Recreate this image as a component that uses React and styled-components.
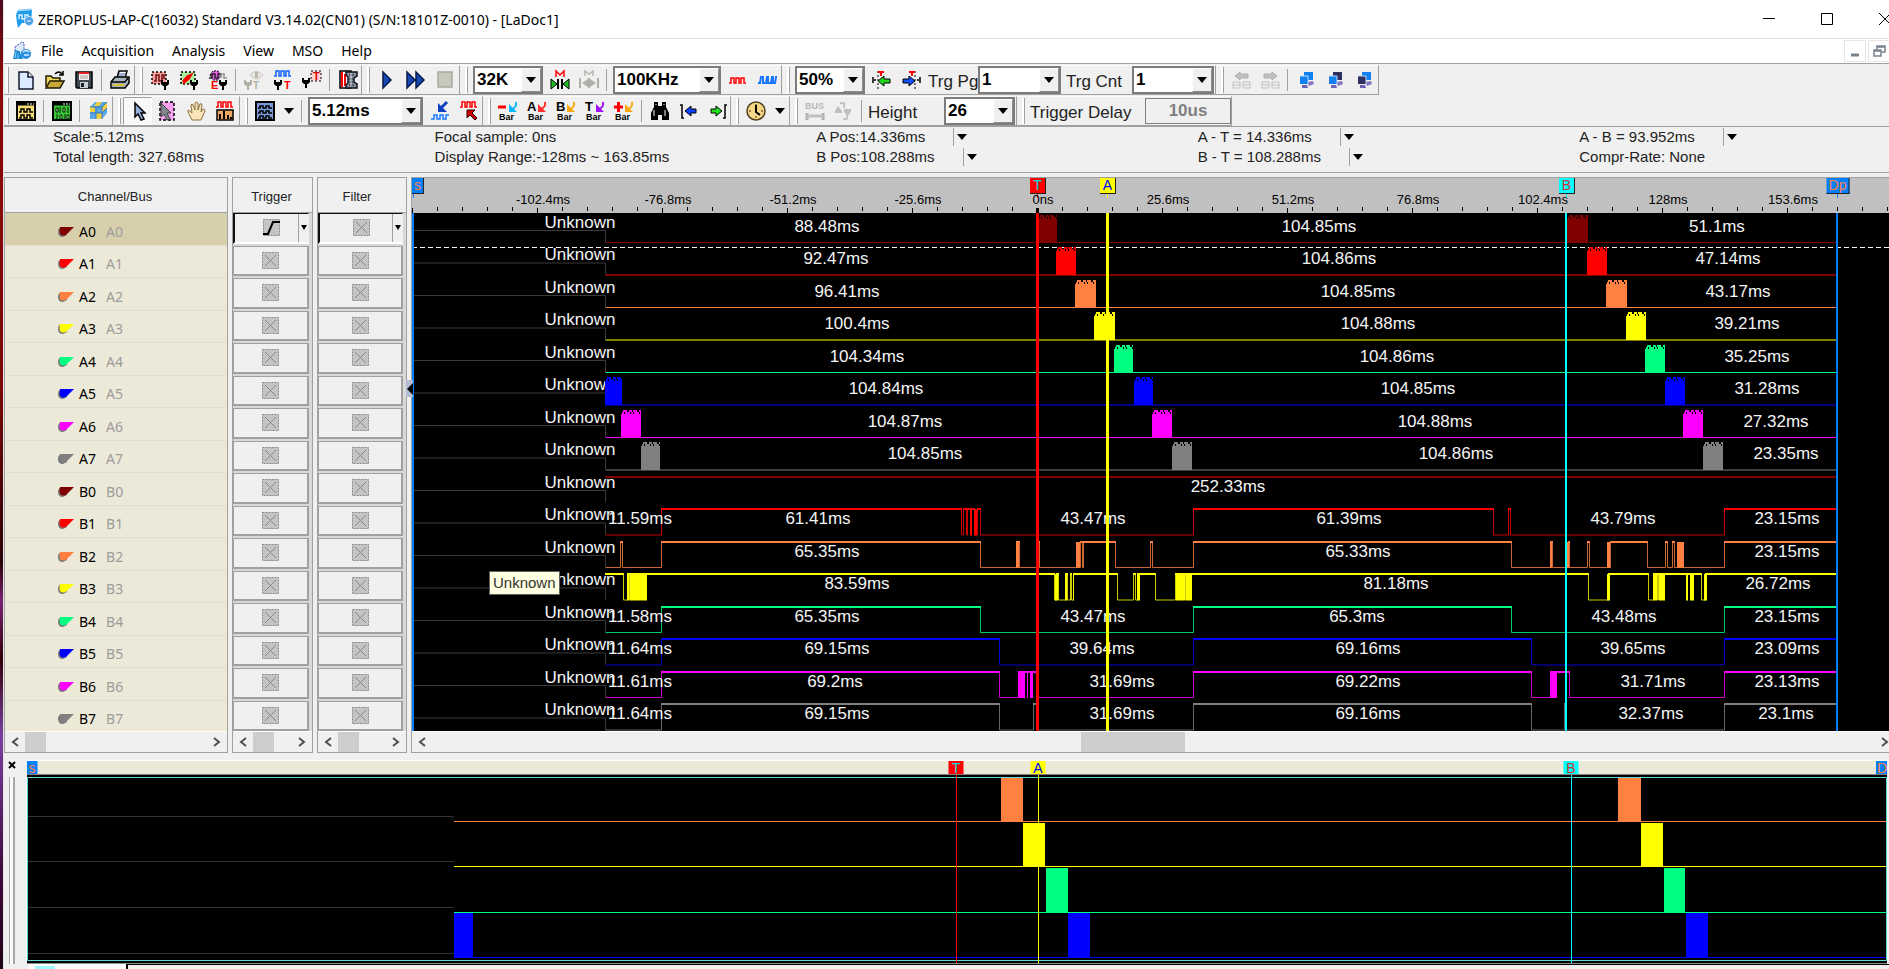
import styled, { createGlobalStyle, css } from "styled-components";

const GlobalStyle = createGlobalStyle`
  *, *::before, *::after {
    box-sizing: border-box;
  }
  body {
    margin: 0;
    overflow: hidden;
    background: #f0f0f0;
    font-family: "Liberation Sans", Arial, sans-serif;
  }
  button, select {
    font: inherit;
    color: inherit;
    border: 0;
    padding: 0;
    background: none;
    border-radius: 0;
  }
`;

const MAROON = "#800000";
const RED = "#ff0000";
const ORANGE = "#ff8040";
const YELLOW = "#ffff00";
const GREEN = "#00ff80";
const BLUE = "#0000ff";
const PINK = "#ff00ff";
const GRAY = "#808080";
const COLORS = [MAROON, RED, ORANGE, YELLOW, GREEN, BLUE, PINK, GRAY];

/* ---------- data ---------- */

// plot x values are window pixels at the default zoom, the plot starts here
const PLOT_LEFT = 412;
const PLOT_WIDTH = 1483;
const PLOT_HEIGHT = 518;
const ROW = 32.5;
const DATA_START = 605;
const DATA_END = 1837;

const CHANNELS = [
  { name: "A0", bumps: [[1038, 1057], [1567, 1588]], labels: [["88.48ms", 827], ["104.85ms", 1319], ["51.1ms", 1717]] },
  { name: "A1", bumps: [[1056, 1076], [1587, 1607]], labels: [["92.47ms", 836], ["104.86ms", 1339], ["47.14ms", 1728]] },
  { name: "A2", bumps: [[1075, 1096], [1606, 1627]], labels: [["96.41ms", 847], ["104.85ms", 1358], ["43.17ms", 1738]] },
  { name: "A3", bumps: [[1094, 1115], [1626, 1646]], labels: [["100.4ms", 857], ["104.88ms", 1378], ["39.21ms", 1747]] },
  { name: "A4", bumps: [[1114, 1133], [1645, 1665]], labels: [["104.34ms", 867], ["104.86ms", 1397], ["35.25ms", 1757]] },
  { name: "A5", bumps: [[605, 622], [1134, 1153], [1665, 1685]], labels: [["104.84ms", 886], ["104.85ms", 1418], ["31.28ms", 1767]] },
  { name: "A6", bumps: [[621, 641], [1152, 1172], [1683, 1703]], labels: [["104.87ms", 905], ["104.88ms", 1435], ["27.32ms", 1776]] },
  { name: "A7", bumps: [[641, 660], [1172, 1192], [1703, 1723]], labels: [["104.85ms", 925], ["104.86ms", 1456], ["23.35ms", 1786]] },
  { name: "B0", high: true, labels: [["252.33ms", 1228]] },
  {
    name: "B1",
    edges: [661, 961, 963, 966, 967, 970, 971, 974, 977, 980, 1193, 1493, 1508, 1510, 1724],
    bursts: [[970, 972], [974, 977]],
    labels: [["11.59ms", 640], ["61.41ms", 818], ["43.47ms", 1093], ["61.39ms", 1349], ["43.79ms", 1623], ["23.15ms", 1787]],
  },
  {
    name: "B2",
    edges: [620, 622, 661, 980, 1016, 1019, 1037, 1039, 1080, 1082, 1083, 1115, 1150, 1152, 1193, 1511, 1550, 1552, 1568, 1569, 1587, 1589, 1610, 1647, 1665, 1667, 1672, 1674, 1724],
    bursts: [[1016, 1019], [1076, 1080], [1550, 1552], [1567, 1569], [1607, 1610], [1677, 1684]],
    labels: [["65.35ms", 827], ["65.33ms", 1358], ["23.15ms", 1787]],
  },
  {
    name: "B3",
    high: true,
    edges: [623, 627, 629, 630, 1054, 1056, 1058, 1065, 1067, 1070, 1071, 1073, 1117, 1133, 1135, 1137, 1155, 1175, 1185, 1186, 1588, 1608, 1648, 1653, 1657, 1658, 1701, 1705],
    bursts: [[627, 629], [630, 647], [1055, 1058], [1065, 1067], [1073, 1074], [1137, 1140], [1176, 1185], [1186, 1192], [1607, 1610], [1653, 1657], [1659, 1665], [1686, 1688], [1690, 1694], [1704, 1707]],
    labels: [["83.59ms", 857], ["81.18ms", 1396], ["26.72ms", 1778]],
  },
  {
    name: "B4",
    edges: [661, 980, 1193, 1511, 1724],
    labels: [["11.58ms", 640], ["65.35ms", 827], ["43.47ms", 1093], ["65.3ms", 1357], ["43.48ms", 1624], ["23.15ms", 1787]],
  },
  {
    name: "B5",
    edges: [661, 999, 1193, 1531, 1724],
    labels: [["11.64ms", 640], ["69.15ms", 837], ["39.64ms", 1102], ["69.16ms", 1368], ["39.65ms", 1633], ["23.09ms", 1787]],
  },
  {
    name: "B6",
    edges: [661, 999, 1018, 1037, 1193, 1531, 1550, 1569, 1724],
    bursts: [[1018, 1025], [1027, 1028], [1030, 1033], [1550, 1557]],
    labels: [["11.61ms", 640], ["69.2ms", 835], ["31.69ms", 1122], ["69.22ms", 1368], ["31.71ms", 1653], ["23.13ms", 1787]],
  },
  {
    name: "B7",
    edges: [661, 999, 1033, 1037, 1193, 1531, 1564, 1566, 1724],
    labels: [["11.64ms", 640], ["69.15ms", 837], ["31.69ms", 1122], ["69.16ms", 1368], ["32.37ms", 1651], ["23.1ms", 1786]],
  },
].map((c, i) => ({ ...c, color: COLORS[i % 8] }));

const CURSORS = [
  { id: "s", x: 413, flag: 418, w: 12, line: 2, bg: "#0080ff", fg: ORANGE },
  { id: "T", x: 1037.5, flag: 1038, w: 16, line: 3, bg: "#ff0000", fg: "#00e0e0" },
  { id: "A", x: 1107.5, flag: 1108, w: 16, line: 3, bg: "#ffff00", fg: "#0000ff" },
  { id: "B", x: 1566, flag: 1567, w: 16, line: 2, bg: "#00ffff", fg: "#d03030" },
  { id: "Dp", x: 1837, flag: 1838, w: 23, line: 2, bg: "#0080ff", fg: ORANGE },
];

const RULER = [
  "-102.4ms", "-76.8ms", "-51.2ms", "-25.6ms", "0ns", "25.6ms",
  "51.2ms", "76.8ms", "102.4ms", "128ms", "153.6ms",
];

const MAP_LEFT = 27;
const MAP_WIDTH = 1860;
const MAP_ROWS = [
  { color: ORANGE, top: 3, low: 46, idle: 41, bumps: [[1001, 1023], [1618, 1641]] },
  { color: YELLOW, top: 48, low: 91, idle: 86, bumps: [[1023, 1045], [1641, 1663]] },
  { color: GREEN, top: 93, low: 137, idle: 132, bumps: [[1046, 1068], [1664, 1685]] },
  { color: BLUE, top: 138, low: 182, idle: 178, bumps: [[454, 473], [1068, 1090], [1686, 1708]] },
];
const MAP_CURSORS = [
  { id: "s", x: 27, flag: 32, w: 11, bg: "#0080ff", fg: ORANGE },
  { id: "T", x: 956, flag: 956, w: 15, bg: "#ff0000", fg: "#00e0e0" },
  { id: "A", x: 1038, flag: 1038, w: 15, bg: "#ffff00", fg: "#0000ff" },
  { id: "B", x: 1571, flag: 1571, w: 15, bg: "#00ffff", fg: "#d03030" },
  { id: "D", x: 1886, flag: 1882, w: 12, bg: "#0080ff", fg: ORANGE },
];

/* ---------- icons ---------- */

const SQUARE = "h2v-5h3v5h2v-5h3v5h2v-5h3v5h2";

const Probe = ({ x = 15, y = 12, color = "#000" }) => (
  <g transform={`translate(${x} ${y})`}>
    <path d="M-4 -2h2v2h4v-2h2v4l-2 2h-4l-2-2z" fill={color} />
    <path d="M0 3v5" stroke={color} strokeWidth="2" />
  </g>
);

const Bar = ({ sign, arrow, color = "#000" }) => (
  <>
    <text x="0" y="10" fontSize="13" fontWeight="bold" fill={color}>{sign}</text>
    <path d="M18 1q1 6-5 7" fill="none" stroke={arrow} strokeWidth="2" />
    <path d="M11 3v8h8z" fill={arrow} />
    <text x="1" y="19" fontSize="9" fontWeight="bold">Bar</text>
  </>
);

const Sign = ({ arrow, d }) => (
  <>
    <path d={d} stroke="#ff0000" strokeWidth="3" />
    <path d="M18 1q1 6-5 7" fill="none" stroke={arrow} strokeWidth="2" />
    <path d="M11 3v8h8z" fill={arrow} />
    <text x="1" y="19" fontSize="9" fontWeight="bold">Bar</text>
  </>
);

const Screens = ({ front, back }) => (
  <>
    <path d="M8 2h9v8h-9z" fill={back} />
    <path d="M11 12l6-1 1 3-5 2z" fill="#8878c0" />
    <path d="M4 6h8v8h-8z" fill={front} />
    <path d="M6 15h5l1 3h-6z" fill="#6f63b5" />
    <path d="M4 6h8v8" fill="none" stroke="#bcd8f5" />
  </>
);

const Panel = ({ bg, children }) => (
  <>
    <path d="M1 1h18v18h-18z" fill={bg} stroke="#000" strokeWidth="2" />
    <path d="M1 3h18" stroke="#000" strokeWidth="3" />
    <path d="M11 3h2M14 3h2M17 3h1" stroke="#fff" />
    {children}
  </>
);

const ICONS = {
  app: (
    <>
      <path d="M4 2l14-1-1 13-9 0-4 5-1-5-1-8z" fill="#1e9be8" />
      <path d="M5 10v-4h3v4h3v-4h3v3" fill="none" stroke="#d9f3ff" strokeWidth="1.500" />
      <path d="M2 6l2-5 14-1" fill="none" stroke="#7cc9f4" />
      <circle cx="15" cy="12" r="4.500" fill="#4f9fe6" stroke="#cfe8fb" />
      <path d="M13 12h4" stroke="#fff" />
    </>
  ),
  doc: (
    <>
      <path d="M3 6l7-5 2 1v9h-9z" fill="#dceafa" stroke="#3a54b5" strokeDasharray="2 1" />
      <path d="M1 18l2-9 4 1 3 5 1 3z" fill="#1b8bdc" />
      <path d="M3 17l1-6M6 18v-5" stroke="#8fd4ff" />
      <circle cx="14" cy="13" r="5" fill="#2a8fdc" />
      <path d="M11 11q3-3 6 0M12 14h5" stroke="#d8f0ff" fill="none" strokeWidth="1.500" />
    </>
  ),
  file: (
    <>
      <path d="M3 2h9l5 5v12h-14z" fill="#dceaff" stroke="#101830" strokeWidth="1.500" />
      <path d="M12 2v5h5" fill="#fff" stroke="#101830" strokeWidth="1.500" />
    </>
  ),
  open: (
    <>
      <path d="M1 17v-11h5l2 2h7v3" fill="#f0d860" stroke="#201800" strokeWidth="1.500" />
      <path d="M1 18l4-7h14l-4 7z" fill="#c8a838" stroke="#201800" strokeWidth="1.500" />
      <path d="M10 4q4-4 7 0M18 1v4h-4" fill="none" stroke="#000" strokeWidth="1.500" />
    </>
  ),
  save: (
    <>
      <path d="M2 2h16v16h-15l-1-1z" fill="#404850" stroke="#000" strokeWidth="1.500" />
      <path d="M5 2h10v8h-10z" fill="#f8f0f0" />
      <path d="M5 3h10" stroke="#e02020" strokeWidth="2" />
      <path d="M6 6h8M6 8h8" stroke="#a0a0a0" />
      <path d="M6 12h8v6h-8z" fill="#c8d0d8" />
      <path d="M7 13h3v4h-3z" fill="#202020" />
    </>
  ),
  print: (
    <>
      <path d="M7 8l2-7h8l-2 7z" fill="#fff" stroke="#000" strokeWidth="1.500" />
      <path d="M9 4h6M8 6h6" stroke="#4060a0" />
      <path d="M1 12l4-5h14v6l-4 5h-14z" fill="#a8b4bc" stroke="#000" strokeWidth="1.500" />
      <path d="M2 12h13l3-4" stroke="#000" fill="none" strokeWidth="1.500" />
      <path d="M3 15h11" stroke="#d8c030" strokeWidth="2" />
    </>
  ),
  sampling: (
    <>
      <path d="M2 2h14v12h-14z" fill="#f8a0a0" stroke="#000" strokeDasharray="2 2" strokeWidth="1.500" />
      <path d="M4 11h2v-6h3v6h3v-6h2v4" fill="none" stroke="#701010" strokeWidth="1.500" />
      <Probe />
    </>
  ),
  analog: (
    <>
      <path d="M2 2h14v12h-14z" fill="#a8f0a0" stroke="#000" strokeDasharray="2 2" strokeWidth="1.500" />
      <path d="M4 11l4-5 5-2-3 5-5 4z" fill="#ff0000" stroke="#ff0000" strokeWidth="1.500" />
      <Probe />
    </>
  ),
  external: (
    <>
      <path d="M2 5l3-4h5l3 4-3 5h-5z" fill="#f060f0" stroke="#000" strokeDasharray="2 1" />
      <path d="M1 8h3v-4h3v4h3v-4h3" fill="none" stroke="#222" strokeWidth="1.500" />
      <path d="M13 8v-4h3v4h3" fill="none" stroke="#909090" strokeWidth="1.500" />
      <text x="3" y="19" fontSize="11" fontWeight="bold" fill="#ff0000">E</text>
      <Probe />
    </>
  ),
  busTrigger: (
    <>
      <path d="M6 5q6-7 13 0-6 8-13 0z" fill="#e8e4dc" stroke="#b8b8b0" strokeDasharray="2 1" />
      <path d="M11 2h3v6h-3z" fill="#b8b8b0" />
      <Probe x={4} color="#b0b0a8" />
      <text x="9" y="19" fontSize="10" fontWeight="bold" fill="#b0b0a8">T</text>
    </>
  ),
  trigger: (
    <>
      <path d={`M1 6${SQUARE}`} fill="none" stroke="#1060ff" strokeWidth="1.500" />
      <Probe x={5} />
      <text x="11" y="19" fontSize="11" fontWeight="bold" fill="#ff0000">T</text>
    </>
  ),
  triggerMark: (
    <>
      <path d="M9 1h10v10h-10z" fill="#ffd0d0" stroke="#000" strokeDasharray="2 2" />
      <text x="11" y="10" fontSize="11" fontWeight="bold" fill="#e00000">T</text>
      <Probe x={4} y={10} />
    </>
  ),
  spool: (
    <>
      <path d="M2 1h11v17h-11z" fill="#fff" stroke="#000" strokeWidth="1.500" />
      <path d="M4 2v15M7 4v12" stroke="#ff0000" strokeWidth="2" />
      <path d="M8 2h11v4l-3 2v4l3 2v4h-11v-3l2-2v-6l-2-2z" fill="#8890a0" stroke="#101018" strokeWidth="1.500" />
      <path d="M11 5h5M11 9h4M11 12h4M11 15h5" stroke="#20242c" />
      <path d="M13 3v13" stroke="#d8dce8" />
    </>
  ),
  run: <path d="M6 2l8 8-8 8z" fill="#1848b8" stroke="#081848" strokeWidth="1.500" />,
  runAll: <path d="M1 2l8 8-8 8zM10 2l8 8-8 8z" fill="#1848b8" stroke="#081848" strokeWidth="1.500" />,
  stop: <path d="M3 2h14v15h-14z" fill="#c8c8bc" stroke="#a8a8a0" strokeWidth="1.500" />,
  zoomM: (
    <>
      <path d="M6 7v-6l4 4 4-4v6" fill="none" stroke="#ff0000" strokeWidth="1.500" />
      <path d="M8 9v10M12 9v10" stroke="#000" strokeWidth="2" />
      <path d="M1 9l6 5-6 5zM19 9l-6 5 6 5z" fill="#20c020" stroke="#000" />
    </>
  ),
  zoomMOff: (
    <>
      <path d="M6 6v-5l4 3 4-3v5" fill="none" stroke="#b8b8b0" strokeWidth="1.500" />
      <path d="M1 8v10M19 8v10M10 8v10" stroke="#b0b0a8" strokeWidth="2" />
      <path d="M9 9l-6 4 6 4zM11 9l6 4-6 4z" fill="#b0b0a8" />
    </>
  ),
  clockRed: <path d={`M1 13${SQUARE}`} fill="none" stroke="#ff0000" strokeWidth="1.500" />,
  clockBlue: <path d="M1 13h2l1-6h2v6h3l1-6h1v6h3l1-6h1v6h2l1-6h1" fill="none" stroke="#1878ff" strokeWidth="2" />,
  moveLeft: (
    <>
      <path d="M6 1v18" stroke="#000" strokeDasharray="2 2" />
      <path d="M1 7v6M2 10h2" stroke="#000" strokeWidth="1.500" />
      <path d="M6 2h6M9 2v4" stroke="#ff0000" strokeWidth="2" />
      <path d="M6 11l6-5v3h6v4h-6v3z" fill="#20d820" stroke="#000" />
    </>
  ),
  moveRight: (
    <>
      <path d="M14 1v18" stroke="#000" strokeDasharray="2 2" />
      <path d="M19 7v6M16 10h2" stroke="#000" strokeWidth="1.500" />
      <path d="M8 2h6M11 2v4" stroke="#ff0000" strokeWidth="2" />
      <path d="M14 11l-6-5v3h-6v4h6v3z" fill="#1050ff" stroke="#000" />
    </>
  ),
  pagePrev: (
    <>
      <path d="M4 6l5-4v2h8v4h-8v2z" fill="#c0c0c0" stroke="#b0b0b0" />
      <path d="M2 12h7v6h-7zM12 12h7v6h-7zM2 15h7M12 15h7" fill="none" stroke="#c0c0c0" />
    </>
  ),
  pageNext: (
    <>
      <path d="M17 6l-5-4v2h-8v4h8v2z" fill="#c0c0c0" stroke="#b0b0b0" />
      <path d="M2 12h7v6h-7zM12 12h7v6h-7zM2 15h7M12 15h7" fill="none" stroke="#c0c0c0" />
    </>
  ),
  tileAll: <Screens front="#1080f0" back="#1080f0" />,
  tileFront: <Screens front="#1080f0" back="#303060" />,
  tileBack: <Screens front="#303060" back="#1080f0" />,
  waveWindow: (
    <Panel bg="#f8dc78">
      <path d="M3 11h2v-3h3v3h3v-3h3v3h3M3 17h2v-3h3v3h3v-3h3v3h3" fill="none" stroke="#000" strokeWidth="1.500" />
    </Panel>
  ),
  listWindow: (
    <Panel bg="#38c838">
      <path d="M4 7h2v4h-2zM11 7h2v4h-2zM8 14h2v4h-2zM15 14h2v4h-2zM8 6v6M16 6v6M5 13v6M13 13v6" fill="#a8f0a0" stroke="#002000" />
    </Panel>
  ),
  cube: (
    <>
      <path d="M2 6l5-5h12v11l-5 6h-12z" fill="#58a8e8" />
      <path d="M2 6h5v5h-5zM9 1h5l-3 4h-5zM8 12h6v6h-6zM14 6l5-5v6l-5 5z" fill="#f0d040" />
      <path d="M2 6h12v12M14 6l5-5M8 6v12M2 12h12l5-5" fill="none" stroke="#3878b8" />
    </>
  ),
  cursor: <path d="M7 2v14l3-3 3 6 3-1-3-6h4z" fill="#98b0e0" stroke="#000" strokeWidth="1.500" />,
  select: (
    <>
      <path d="M3 1h14v18h-14z" fill="#f8a0f0" stroke="#000" strokeDasharray="3 2" strokeWidth="1.500" />
      <path d="M4 2v14l3-3 3 6 3-1-3-6h4z" fill="#808890" stroke="#404040" />
    </>
  ),
  hand: (
    <path
      d="M6 19l-4-8q-1-3 2-1l2 2-1-8q1-2 2 0l2 5v-7q2-2 3 0v7l2-6q2-1 2 1l-1 7 2-3q2 0 2 2l-4 9z"
      fill="#f8e4b8"
      stroke="#8c7440"
    />
  ),
  stats: (
    <>
      <path d={`M1 6${SQUARE}`} fill="none" stroke="#ff0000" strokeWidth="1.500" />
      <path d="M2 9h16v10h-16z" fill="#f0a868" stroke="#000" strokeWidth="1.500" />
      <path d="M5 18v-5M9 18v-8M13 18v-4M16 18v-2" stroke="#000" strokeWidth="2" />
    </>
  ),
  noise: (
    <>
      <path d="M1 1h18v18h-18z" fill="#7898d8" stroke="#000" strokeWidth="2" />
      <path d="M3 7h2v-2h3v2h3v-2h3v2h3M3 12h2v-2h3v2h3v-2h3v2h3M3 17h2v-2h3v2h3v-2h3v2h3" fill="none" stroke="#000" strokeWidth="1.500" />
    </>
  ),
  zoomOutWave: (
    <>
      <path d="M17 1l-6 6" stroke="#1040c0" strokeWidth="3" />
      <path d="M8 2v9h9z" fill="#1040c0" />
      <path d="M1 18h3v-4h3v4h3v-4h3v4h3v-4h3" fill="none" stroke="#1878ff" strokeWidth="1.500" />
    </>
  ),
  zoomInWave: (
    <>
      <path d={`M1 6${SQUARE}`} fill="none" stroke="#ff0000" strokeWidth="1.500" />
      <path d="M8 9h8l-3 3 5 5-2 2-5-5-3 3z" fill="#d00000" stroke="#300000" />
    </>
  ),
  barMinus: <Sign d="M0 6h8" arrow="#10b8f8" />,
  barA: <Bar sign="A" arrow="#ff3030" />,
  barB: <Bar sign="B" arrow="#f8a810" />,
  barT: <Bar sign="T" arrow="#a010f8" />,
  barPlus: <Sign d="M0 6h9M4.500 1v10" arrow="#f8a810" />,
  find: (
    <>
      <path d="M4 1h4v4h4v-4h4v5l3 6v7h-7v-5h-4v5h-7v-7l3-6z" fill="#000" />
      <path d="M4 9v6M15 9v6M6 3v1M14 3v1" stroke="#fff" />
    </>
  ),
  prevEdge: (
    <>
      <path d="M1 4h2v13h2" fill="none" stroke="#000" strokeWidth="1.500" />
      <path d="M6 10l6-5v3h5v4h-5v3z" fill="#1040ff" stroke="#000" />
    </>
  ),
  nextEdge: (
    <>
      <path d="M19 4h-2v13h-2" fill="none" stroke="#000" strokeWidth="1.500" />
      <path d="M14 10l-6-5v3h-5v4h5v3z" fill="#20e020" stroke="#000" />
    </>
  ),
  clock: (
    <>
      <circle cx="10" cy="10" r="9" fill="#f4d888" stroke="#504020" strokeWidth="1.500" />
      <path d="M10 3v2M10 15v2M3 10h2M15 10h2" stroke="#806020" strokeWidth="1.500" />
      <path d="M10 4v7l4 3" fill="none" stroke="#000" strokeWidth="2" />
    </>
  ),
  bus: (
    <>
      <text x="0" y="8" fontSize="9" fontWeight="bold" fill="#b8b8b8">BUS</text>
      <path d="M2 12v7M18 12v7" stroke="#b0b0b0" strokeWidth="3" />
      <path d="M2 15h16" stroke="#c0c0c0" strokeWidth="3" />
    </>
  ),
  filterOff: (
    <>
      <path d="M6 2h4v5M9 18h4v-4" fill="none" stroke="#b8b8b8" strokeWidth="1.500" />
      <path d="M1 10l3-5 4 5v2h-7zM10 8h7v3l-3 4-4-4z" fill="#c0c0c0" />
    </>
  ),
  close: <path d="M4 4l12 12M16 4l-12 12" stroke="#000" />,
  minimize: <path d="M4 9.500h12" stroke="#000" />,
  maximize: <path d="M4.500 4.500h11v11h-11z" fill="none" stroke="#000" />,
  mdiMinimize: <path d="M6 14h8" stroke="#77828f" strokeWidth="3" />,
  mdiRestore: (
    <path d="M8 8v-3h8v6h-3M5 9h7v6h-7zM5 10h7M8 6h8" fill="none" stroke="#77828f" strokeWidth="1.500" />
  ),
};

const Svg = styled.svg`
  flex: none;
  overflow: visible;
`;

const Glyph = ({ name }) => (
  <Svg width="20" height="20" viewBox="0 0 20 20" aria-hidden="true">
    {ICONS[name]}
  </Svg>
);

const Triangle = () => (
  <svg width="10" height="6" viewBox="0 0 10 6" aria-hidden="true">
    <path d="M0 0h10l-5 6z" />
  </svg>
);

/* ---------- window chrome ---------- */

const Desktop = styled.div`
  height: 100vh;
  padding-left: 3px;
  overflow: hidden;
  background: linear-gradient(#4a0a20, #8c0a08 8%, #7a0806 40%, #2a0206 58%, #7a2070 62%, #300008 68%, #7a40a0 76%, #40083c 90%, #200418);
`;

const Window = styled.div`
  height: 100%;
  display: flex;
  flex-direction: column;
  background: #f0f0f0;
  border-left: 1px solid #e4e4e4;
`;

const TitleBar = styled.header`
  flex: none;
  height: 39px;
  display: flex;
  align-items: center;
  gap: 4px;
  padding-left: 10px;
  background: #fff;
  border-bottom: 1px solid #e4e4e4;
  font: 14px "Noto Sans", "Open Sans", sans-serif;
`;

const Title = styled.h1`
  flex: 1;
  margin: 0;
  font: inherit;
  white-space: nowrap;
`;

const WindowButton = styled.button`
  flex: none;
  width: 58px;
  height: 38px;
  display: grid;
  place-items: center;
`;

const WindowButtons = styled.div`
  display: flex;
  margin-right: -25px;
`;

const MenuBar = styled.nav`
  flex: none;
  height: 24px;
  display: flex;
  align-items: center;
  padding: 0 0 1px 8px;
  background: #fff;
  font: 14px "Noto Sans", "Open Sans", sans-serif;
`;

const MenuItem = styled.button`
  padding: 0 9px;
  line-height: 22px;
`;

const MdiButtons = styled.div`
  display: flex;
  gap: 2px;
  margin-left: auto;
  margin-right: -1px;
`;

const MdiButton = styled.button`
  width: 22px;
  height: 22px;
  display: grid;
  place-items: center;
  border: 1px solid #e6e6e6;
`;

/* ---------- toolbars ---------- */

const Toolbars = styled.div`
  flex: none;
  border-top: 1px solid #a0a0a0;
  border-bottom: 1px solid #a0a0a0;
`;

const ToolRow = styled.div`
  display: flex;
  height: 31px;
  padding-top: 1px;
`;

const Group = styled.div`
  flex: none;
  width: ${(p) => p.$w}px;
  display: flex;
  align-items: center;
  padding-left: 10px;
  border-right: 1px solid #a0a0a0;
  border-bottom: 1px solid #a0a0a0;
  border-top: 1px solid #fafafa;
  background: linear-gradient(#a0a0a0, #a0a0a0) 7px 1px / 1px 26px no-repeat,
    linear-gradient(#fff, #fff) 5px 1px / 2px 26px no-repeat;

  &:first-child {
    padding-left: 7px;
    background-position: 4px 1px, 2px 1px;
  }
`;

const IconButton = styled.button`
  flex: none;
  width: 29px;
  height: 28px;
  display: grid;
  place-items: center;
  ${(p) =>
    p.$pressed &&
    css`
      background: #f8f8f8;
      border: 1px solid;
      border-color: #a0a0a0 #fff #fff #a0a0a0;
    `}
`;

const DropButton = styled.button`
  flex: none;
  width: 19px;
  height: 28px;
  display: grid;
  place-items: center;
`;

const Separator = styled.span`
  flex: none;
  width: 1px;
  height: 22px;
  margin: 0 3px;
  background: #a0a0a0;
`;

const ComboBox = styled.span`
  flex: none;
  width: ${(p) => p.$w}px;
  height: 28px;
  margin: 0 2px 0 3px;
  display: flex;
  position: relative;
  background: #fff;
  border: 2px solid #7c7c7c;
`;

const ComboSelect = styled.select`
  width: 100%;
  padding: 0 22px 0 2px;
  appearance: none;
  font-weight: bold;
  font-size: 17px;
  line-height: 22px;
`;

const ComboArrow = styled.span`
  position: absolute;
  inset: 0 0 0 auto;
  width: 20px;
  display: grid;
  place-items: center;
  pointer-events: none;
  background: #f0f0f0;
  border: 1px solid;
  border-color: #fff #8c8c8c #8c8c8c #fff;
`;

const ToolLabel = styled.label`
  flex: none;
  width: ${(p) => p.$w}px;
  padding: 3px 0 0 3px;
  font-size: 17px;
  color: #222;
  white-space: nowrap;
`;

const DelayButton = styled.button`
  flex: none;
  width: 86px;
  height: 26px;
  border: 1px solid #808080;
  font-size: 17px;
  font-weight: bold;
  color: #808080;
`;

const Tool = ({ name, label, pressed }) => (
  <IconButton type="button" aria-label={label} $pressed={pressed}>
    <Glyph name={name} />
  </IconButton>
);

const Combo = ({ id, label, value, w }) => (
  <ComboBox $w={w}>
    <ComboSelect id={id} aria-label={label} defaultValue={value}>
      <option>{value}</option>
    </ComboSelect>
    <ComboArrow>
      <Triangle />
    </ComboArrow>
  </ComboBox>
);

/* ---------- status ---------- */

const Status = styled.section`
  flex: none;
  height: 46px;
  display: grid;
  grid-template-columns: repeat(5, 20.2vw);
  padding-left: 49px;
  border-bottom: 1px solid #a0a0a0;
  font-size: 15px;
  line-height: 20px;
  color: #222;
`;

const StatusLine = styled.div`
  display: flex;
  align-items: center;
  white-space: nowrap;
`;

const StatusDrop = styled.button`
  height: 18px;
  margin-left: 28px;
  padding-left: 3px;
  display: grid;
  place-items: center;
  border-left: 1px solid #a0a0a0;
`;

const STATUS = [
  [["Scale:5.12ms"], ["Total length: 327.68ms"]],
  [["Focal sample: 0ns"], ["Display Range:-128ms ~ 163.85ms"]],
  [["A Pos:14.336ms", true], ["B Pos:108.288ms", true]],
  [["A - T = 14.336ms", true], ["B - T = 108.288ms", true]],
  [["A - B = 93.952ms", true], ["Compr-Rate: None"]],
];

/* ---------- panels ---------- */

const Workspace = styled.main`
  flex: none;
  display: flex;
  gap: 4px;
  padding-top: 4px;
`;

const PanelBox = styled.section`
  flex: none;
  width: ${(p) => p.$w}px;
  border: 1px solid #a0a0a0;
`;

const PanelHeader = styled.h2`
  height: 35px;
  margin: 0;
  padding: 3px ${(p) => p.$end || 2}px 0 0;
  display: grid;
  place-items: center;
  border-bottom: 1px solid #a0a0a0;
  font-size: 13px;
  font-weight: normal;
  color: #222;
`;

const PanelBody = styled.div`
  height: 518px;
  overflow: hidden;
  background: ${(p) => p.$bg};
`;

const Rows = styled.ul`
  height: 520px;
  margin: 0;
  padding: 0;
  list-style: none;
  display: grid;
  grid-template-rows: repeat(16, 1fr);
`;

const ChannelRow = styled.li`
  display: flex;
  align-items: center;
  gap: 6px;
  padding: 6px 0 0 53px;
  font: 14px "Noto Sans", "Open Sans", sans-serif;
  line-height: 20px;
  border-bottom: 1px solid #e0dfd0;
  background: ${(p) => (p.$active ? "#d8d0ac" : "#ece9d8")};
`;

const ChannelAlias = styled.span`
  margin-left: 4px;
  color: #9c9c9c;
`;

const CellRow = styled.li`
  padding: 0 3px 2px 0;
  display: flex;
`;

const Cell = styled.button`
  flex: 1;
  display: grid;
  place-items: center;
  position: relative;
  background: #f0f0f0;
  border: 1px solid #a0a0a0;
  border-width: 1px 2px 2px 1px;
  ${(p) =>
    p.$active &&
    css`
      border-color: #101010 #f0f0f0 #fff #101010;
      border-width: 1px 1px 2px 2px;
    `}
`;

const CellDrop = styled.span`
  position: absolute;
  inset: 0 0 0 auto;
  width: 10px;
  display: grid;
  place-items: center;
  border-left: 1px solid #a0a0a0;
`;

const ScrollBar = styled.div`
  height: 21px;
  display: flex;
  align-items: stretch;
  background: #f0f0f0;
  border-top: 1px solid #fff;
`;

const ScrollButton = styled.button`
  flex: none;
  width: 20px;
  display: grid;
  place-items: center;
`;

const ScrollTrack = styled.div`
  flex: 1;
  display: flex;
`;

const ScrollThumb = styled.div`
  width: ${(p) => p.$w}px;
  margin-left: ${(p) => p.$at};
  background: #cdcdcd;
`;

const Scroller = ({ w = 21, at = "0" }) => (
  <ScrollBar>
    <ScrollButton type="button" aria-label="Scroll left">
      <svg width="8" height="10" viewBox="0 0 8 10">
        <path d="M7 1l-5 4 5 4" fill="none" stroke="#505050" strokeWidth="2" />
      </svg>
    </ScrollButton>
    <ScrollTrack>
      <ScrollThumb $w={w} $at={at} />
    </ScrollTrack>
    <ScrollButton type="button" aria-label="Scroll right">
      <svg width="8" height="10" viewBox="0 0 8 10">
        <path d="M1 1l5 4-5 4" fill="none" stroke="#505050" strokeWidth="2" />
      </svg>
    </ScrollButton>
  </ScrollBar>
);

const DontCare = () => (
  <svg width="17" height="17" viewBox="0 0 17 17" aria-hidden="true">
    <path d="M.5 .5h16v16h-16z" fill="#c4c4c4" stroke="#888" strokeDasharray="2 1" />
    <path d="M3 3l11 11M14 3l-11 11" stroke="#888" />
  </svg>
);

const RisingEdge = () => (
  <svg width="17" height="17" viewBox="0 0 17 17" aria-hidden="true">
    <path d="M.5 .5h16v16h-16z" fill="#c4c4c4" stroke="#888" strokeDasharray="2 1" />
    <path d="M0 15h5l5-12h7" fill="none" stroke="#000" strokeWidth="2" />
  </svg>
);

const CellPanel = ({ title, w, end, first }) => (
  <PanelBox $w={w}>
    <PanelHeader $end={end}>{title}</PanelHeader>
    <PanelBody $bg="#d8d8d8">
      <Rows>
        {CHANNELS.map((c, i) => (
          <CellRow key={c.name}>
            <Cell type="button" $active={i === 0} aria-label={`${title} ${c.name}`}>
              {i === 0 ? first : <DontCare />}
              {i === 0 && (
                <CellDrop>
                  <svg width="6" height="5" viewBox="0 0 6 5">
                    <path d="M0 0h6l-3 5z" />
                  </svg>
                </CellDrop>
              )}
            </Cell>
          </CellRow>
        ))}
      </Rows>
    </PanelBody>
    <Scroller />
  </PanelBox>
);

/* ---------- waveform ---------- */

const WavePanel = styled.section`
  flex: 1;
  min-width: 0;
  margin-right: -6px;
  position: relative;
  border: 1px solid #a0a0a0;
  border-right: 0;
`;

const Ruler = styled.div`
  position: relative;
  height: 35px;
  overflow: hidden;
  background: #c0c0c0;
`;

const RulerLabel = styled.span`
  position: absolute;
  top: 14px;
  padding-left: 12px;
  transform: translateX(-50%);
  font-size: 13px;
  line-height: 16px;
  white-space: nowrap;
`;

const Flag = styled.span`
  position: absolute;
  top: 0;
  width: ${(p) => p.$w}px;
  height: ${(p) => p.$h || 16}px;
  transform: translateX(-50%);
  text-align: center;
  font-size: 14px;
  line-height: 15px;
  background: ${(p) => p.$bg};
  color: ${(p) => p.$fg};
  border: solid #222;
  border-width: ${(p) => (p.$h ? 0 : "0 1px 1px 0")};
`;

const Plot = styled.div`
  position: relative;
  height: 518px;
  overflow: hidden;
  background: #000;
  color: #f4f4f4;
  font-size: 17px;
  line-height: 20px;
`;

const Layer = styled.svg`
  position: absolute;
  inset: 0;
  width: 100%;
  height: 100%;
`;

const Reading = styled.span`
  position: absolute;
  transform: translateX(-50%);
  white-space: nowrap;
`;

const Tooltip = styled.div`
  position: absolute;
  top: 358px;
  padding: 0 3px;
  z-index: 1;
  background: #ffffe1;
  border: 1px solid #606060;
  font-size: 15px;
  line-height: 22px;
  color: #333;
`;

const SplitHandle = styled.button`
  position: absolute;
  left: -6px;
  top: 202px;
  width: 7px;
  height: 17px;
  display: grid;
  place-items: center;
  background: #b4bcd4;
`;

const percent = (x, left, width) => `${((x - left) / width) * 100}%`;
const plotX = (x) => percent(x, PLOT_LEFT, PLOT_WIDTH);
const mapX = (x) => percent(x, MAP_LEFT, MAP_WIDTH);

const LOW = 29.5;

const Trace = ({ channel, y }) => {
  const { color, high, edges = [], bumps = [], bursts = [] } = channel;
  // keep the high level on whole pixels, rows are half a pixel apart
  const top = Math.floor(y) + 4 - y;
  let up = Boolean(high);
  let x = DATA_START;
  let d = `M${x - PLOT_LEFT + 0.5} ${up ? top : LOW}`;
  const tops = [];
  [...edges, DATA_END].forEach((next) => {
    if (up) tops.push([x, next]);
    d += `H${next - PLOT_LEFT + 0.5}`;
    if (next !== DATA_END) {
      up = !up;
      d += `V${up ? top : LOW}`;
    }
    x = next;
  });
  return (
    <g transform={`translate(0 ${y})`}>
      <path d={`M0 17.500H${DATA_START - PLOT_LEFT + 0.5}V29`} stroke="#3a3a3a" fill="none" />
      <path d={d} stroke={color} strokeOpacity={bumps.length ? 1 : 0.8} fill="none" />
      {tops.map(([a, b]) => (
        <path key={a} d={`M${a - PLOT_LEFT} ${top}H${b - PLOT_LEFT + 1}`} stroke={color} strokeWidth="2" />
      ))}
      {bursts.map(([a, b]) => (
        <path key={a} d={`M${a - PLOT_LEFT} ${top}H${b - PLOT_LEFT}V30H${a - PLOT_LEFT}z`} fill={color} />
      ))}
    </g>
  );
};

const WaveView = () => (
  <WavePanel aria-label="Waveform">
    <Ruler>
      <Layer viewBox={`0 0 ${PLOT_WIDTH} 35`} preserveAspectRatio="none">
        {Array.from({ length: 60 }, (_, i) => (
          <path
            key={i}
            d={`M${i * 25 + 0.5} ${i % 5 ? "29V33" : "30V35"}`}
            stroke="#000"
            strokeWidth={i === 25 ? 3 : 1}
          />
        ))}
        {CURSORS.map((c) => (
          <path key={c.id} d={`M${Math.floor(c.x) - PLOT_LEFT + 0.5} 15V20`} stroke={c.bg} />
        ))}
      </Layer>
      {RULER.map((label, i) => (
        <RulerLabel key={label} style={{ left: plotX(PLOT_LEFT + (i + 1) * 125) }}>
          {label}
        </RulerLabel>
      ))}
      {CURSORS.map((c) => (
        <Flag key={c.id} $w={c.w} $bg={c.bg} $fg={c.fg} style={{ left: plotX(c.flag) }}>
          {c.id}
        </Flag>
      ))}
    </Ruler>
    <Plot>
      <Layer viewBox={`0 0 ${PLOT_WIDTH} ${PLOT_HEIGHT}`} preserveAspectRatio="none">
        {CHANNELS.map((c, i) => (
          <Trace key={c.name} channel={c} y={i * ROW} />
        ))}
        <path d={`M0 34.500H${PLOT_WIDTH}`} stroke="#fff" strokeDasharray="5 3" />
      </Layer>
      {CHANNELS.map((c, i) => (
        <div key={c.name}>
          <Reading style={{ left: plotX(580), top: Math.floor(i * ROW) }}>Unknown</Reading>
          {c.labels.map(([text, x]) => (
            <Reading key={x} style={{ left: plotX(x), top: Math.floor(i * ROW) + 4 }}>
              {text}
            </Reading>
          ))}
        </div>
      ))}
      <Layer viewBox={`0 0 ${PLOT_WIDTH} ${PLOT_HEIGHT}`} preserveAspectRatio="none">
        {CHANNELS.map((c, i) =>
          (c.bumps || []).map(([a, b]) => (
            <g key={`${c.name}${a}`} transform={`translate(${a - PLOT_LEFT} ${Math.floor(i * ROW)})`}>
              <path d={`M0 6H${b - a}V30H0z`} fill={c.color} />
              <path d={`M1 5H${b - a}`} stroke={c.color} strokeWidth="2" strokeDasharray="2 1 5 1" />
              <path d={`M2 3H${b - a}`} stroke={c.color} strokeWidth="2" strokeDasharray="4 2 3 1" />
            </g>
          ))
        )}
        {CURSORS.map((c) => (
          <path
            key={c.id}
            d={`M${c.x - PLOT_LEFT} 0V${PLOT_HEIGHT}`}
            stroke={c.bg}
            strokeWidth={c.line}
          />
        ))}
      </Layer>
      <Tooltip role="tooltip" style={{ left: plotX(489) }}>
        Unknown
      </Tooltip>
    </Plot>
    <SplitHandle type="button" aria-label="Collapse panels">
      <svg width="6" height="12" viewBox="0 0 6 12">
        <path d="M6 0v12l-6-6z" />
      </svg>
    </SplitHandle>
    <Scroller w={104} at="45%" />
  </WavePanel>
);

/* ---------- overview ---------- */

const Overview = styled.section`
  flex: none;
  display: flex;
  margin-top: 7px;
`;

const OverviewSide = styled.div`
  flex: none;
  width: 23px;
  padding-right: 7px;
  display: flex;
  flex-direction: column;
  align-items: center;
  gap: 7px;
`;

const OverviewClose = styled.button`
  width: 10px;
  height: 10px;
  display: grid;
  place-items: center;
`;

const Grip = styled.div`
  flex: 1;
  width: 6px;
  background: #fafafa;
  border: solid #a8a8a8;
  border-width: 0 2px 0 1px;
`;

const OverviewMain = styled.div`
  flex: 1;
  min-width: 0;
  margin-right: 2px;
`;

const OverviewRuler = styled.div`
  position: relative;
  height: 15px;
  overflow: hidden;
  background: #ece9d8;
  border-top: 1px solid #fff;
  border-bottom: 1px solid #808080;
`;

const OverviewPlot = styled.div`
  position: relative;
  height: 189px;
  background: #000;
  border-bottom: 1px solid #909090;
`;

const Tabs = styled.div`
  flex: 1;
  min-height: 4px;
  display: flex;
  margin-left: 25px;
`;

const Tab = styled.button`
  width: 99px;
  padding: 2px 0 0 6px;
  background: #fff;
  border-right: 2px solid #000;
  display: flex;
  &::before {
    content: "";
    width: 20px;
    height: 3px;
    background: #a0f8ff;
  }
`;

const TabRest = styled.div`
  flex: 1;
  border-top: 1px solid #000;
`;

const OverviewPane = () => (
  <Overview aria-label="Navigator">
    <OverviewSide>
      <OverviewClose type="button" aria-label="Close navigator">
        <svg width="8" height="8" viewBox="0 0 8 8">
          <path d="M1 1l6 6M7 1l-6 6" stroke="#000" strokeWidth="2" />
        </svg>
      </OverviewClose>
      <Grip />
    </OverviewSide>
    <OverviewMain>
      <OverviewRuler>
        {MAP_CURSORS.map((c) => (
          <Flag key={c.id} $w={c.w} $h={14} $bg={c.bg} $fg={c.fg} style={{ left: mapX(c.flag) }}>
            {c.id}
          </Flag>
        ))}
      </OverviewRuler>
      <OverviewPlot>
        <Layer viewBox={`0 0 ${MAP_WIDTH} 188`} preserveAspectRatio="none">
          {MAP_ROWS.map((r) => (
            <g key={r.color}>
              <path d={`M0 ${r.idle + 0.5}H${454 - MAP_LEFT}`} stroke="#333" />
              <path d={`M${454 - MAP_LEFT} ${r.low + 0.5}H${MAP_WIDTH}`} stroke={r.color} />
              {r.bumps.map(([a, b]) => (
                <path key={a} d={`M${a - MAP_LEFT} ${r.top}H${b - MAP_LEFT}V${r.low}H${a - MAP_LEFT}z`} fill={r.color} />
              ))}
            </g>
          ))}
          <path d={`M.5 2.500H${MAP_WIDTH - 0.5}V185.500H.5z`} fill="none" stroke="#60d8d8" />
          {MAP_CURSORS.slice(1, 4).map((c) => (
            <path key={c.id} d={`M${c.x - MAP_LEFT + 0.5} 0V188`} stroke={c.bg} />
          ))}
        </Layer>
      </OverviewPlot>
    </OverviewMain>
  </Overview>
);

/* ---------- app ---------- */

const App = () => (
  <>
    <GlobalStyle />
    <Desktop>
      <Window>
        <TitleBar>
          <Glyph name="app" />
          <Title>ZEROPLUS-LAP-C(16032) Standard V3.14.02(CN01) (S/N:18101Z-0010) - [LaDoc1]</Title>
          <WindowButtons>
            <WindowButton type="button" aria-label="Minimize"><Glyph name="minimize" /></WindowButton>
            <WindowButton type="button" aria-label="Maximize"><Glyph name="maximize" /></WindowButton>
            <WindowButton type="button" aria-label="Close"><Glyph name="close" /></WindowButton>
          </WindowButtons>
        </TitleBar>
        <MenuBar>
          <Glyph name="doc" />
          {["File", "Acquisition", "Analysis", "View", "MSO", "Help"].map((m) => (
            <MenuItem key={m} type="button">{m}</MenuItem>
          ))}
          <MdiButtons>
            <MdiButton type="button" aria-label="Minimize document"><Glyph name="mdiMinimize" /></MdiButton>
            <MdiButton type="button" aria-label="Restore document"><Glyph name="mdiRestore" /></MdiButton>
          </MdiButtons>
        </MenuBar>

        <Toolbars>
          <ToolRow>
            <Group $w={131}>
              <Tool name="file" label="New" />
              <Tool name="open" label="Open" />
              <Tool name="save" label="Save" />
              <Separator />
              <Tool name="print" label="Print" />
            </Group>
            <Group $w={227}>
              <Tool name="sampling" label="Sampling setup" />
              <Tool name="analog" label="Channels setup" />
              <Tool name="external" label="External clock" />
              <Separator />
              <Tool name="busTrigger" label="Bus trigger" />
              <Tool name="trigger" label="Trigger property" />
              <Tool name="triggerMark" label="Trigger mark" />
              <Separator />
              <Tool name="spool" label="Compression" />
            </Group>
            <Group $w={98}>
              <Tool name="run" label="Run" />
              <Tool name="runAll" label="Repetitive run" />
              <Tool name="stop" label="Stop" />
            </Group>
            <Group $w={322}>
              <Combo label="Memory depth" value="32K" w={70} />
              <Tool name="zoomM" label="Widen memory" />
              <Tool name="zoomMOff" label="Narrow memory" />
              <Separator />
              <Combo label="Sample rate" value="100KHz" w={108} />
              <Tool name="clockRed" label="Internal clock" />
              <Tool name="clockBlue" label="External clock source" />
            </Group>
            <Group $w={434}>
              <Combo label="Trigger position" value="50%" w={70} />
              <Tool name="moveLeft" label="Move left" />
              <Tool name="moveRight" label="Move right" />
              <ToolLabel htmlFor="page" $w={50}>Trg Pg</ToolLabel>
              <Combo id="page" value="1" w={83} />
              <ToolLabel htmlFor="count" $w={66}>Trg Cnt</ToolLabel>
              <Combo id="count" value="1" w={82} />
            </Group>
            <Group $w={163}>
              <Tool name="pagePrev" label="Previous page" />
              <Tool name="pageNext" label="Next page" />
              <Separator />
              <Tool name="tileAll" label="Cascade" />
              <Tool name="tileFront" label="Tile front" />
              <Tool name="tileBack" label="Tile back" />
            </Group>
          </ToolRow>
          <ToolRow>
            <Group $w={109}>
              <Tool name="waveWindow" label="Waveform window" />
              <Separator />
              <Tool name="listWindow" label="State list" />
              <Separator />
              <Tool name="cube" label="Navigator" />
            </Group>
            <Group $w={127}>
              <Tool name="cursor" label="Pointer" pressed />
              <Tool name="select" label="Select area" />
              <Tool name="hand" label="Pan" />
              <Tool name="stats" label="Statistics" />
            </Group>
            <Group $w={243}>
              <Tool name="noise" label="Wave mode" />
              <DropButton type="button" aria-label="Wave mode menu"><Triangle /></DropButton>
              <Separator />
              <Combo label="Scale" value="5.12ms" w={115} />
              <Tool name="zoomOutWave" label="Zoom out" />
              <Tool name="zoomInWave" label="Zoom in" />
            </Group>
            <Group $w={248}>
              <Tool name="barMinus" label="Delete bar" />
              <Tool name="barA" label="Go to A bar" />
              <Tool name="barB" label="Go to B bar" />
              <Tool name="barT" label="Go to T bar" />
              <Tool name="barPlus" label="Add bar" />
              <Separator />
              <Tool name="find" label="Find" />
              <Tool name="prevEdge" label="Previous edge" />
              <Tool name="nextEdge" label="Next edge" />
            </Group>
            <Group $w={59}>
              <Tool name="clock" label="Time" />
              <DropButton type="button" aria-label="Time menu"><Triangle /></DropButton>
            </Group>
            <Group $w={227}>
              <Tool name="bus" label="Bus" />
              <Tool name="filterOff" label="Filter" />
              <Separator />
              <ToolLabel htmlFor="height" $w={76}>Height</ToolLabel>
              <Combo id="height" value="26" w={71} />
            </Group>
            <Group $w={215}>
              <ToolLabel htmlFor="delay" $w={118}>Trigger Delay</ToolLabel>
              <DelayButton id="delay" type="button">10us</DelayButton>
            </Group>
          </ToolRow>
        </Toolbars>

        <Status>
          {STATUS.map((lines, i) => (
            <div key={i}>
              {lines.map(([text, drop]) => (
                <StatusLine key={text}>
                  {text}
                  {drop && (
                    <StatusDrop type="button" aria-label={`${text} menu`}>
                      <Triangle />
                    </StatusDrop>
                  )}
                </StatusLine>
              ))}
            </div>
          ))}
        </Status>

        <Workspace>
          <PanelBox $w={224}>
            <PanelHeader>Channel/Bus</PanelHeader>
            <PanelBody $bg="#ece9d8">
              <Rows>
                {CHANNELS.map((c, i) => (
                  <ChannelRow key={c.name} $active={i === 0}>
                    <Svg width="15" height="10" viewBox="0 0 15 10" aria-hidden="true">
                      <path d="M5 0q-5 0-5 5t5 5l4-2v-8z" fill="#787878" />
                      <path d="M2 0h14l-7 7q-4 3-7 0-1-3 0-7z" fill={c.color} />
                    </Svg>
                    <span>{c.name}</span>
                    <ChannelAlias>{c.name}</ChannelAlias>
                  </ChannelRow>
                ))}
              </Rows>
            </PanelBody>
            <Scroller />
          </PanelBox>
          <CellPanel title="Trigger" w={81} first={<RisingEdge />} />
          <CellPanel title="Filter" w={90} end={10} first={<DontCare />} />
          <WaveView />
        </Workspace>

        <OverviewPane />
        <Tabs>
          <Tab type="button" aria-label="Navigator tab" />
          <TabRest />
        </Tabs>
      </Window>
    </Desktop>
  </>
);

export default App;
